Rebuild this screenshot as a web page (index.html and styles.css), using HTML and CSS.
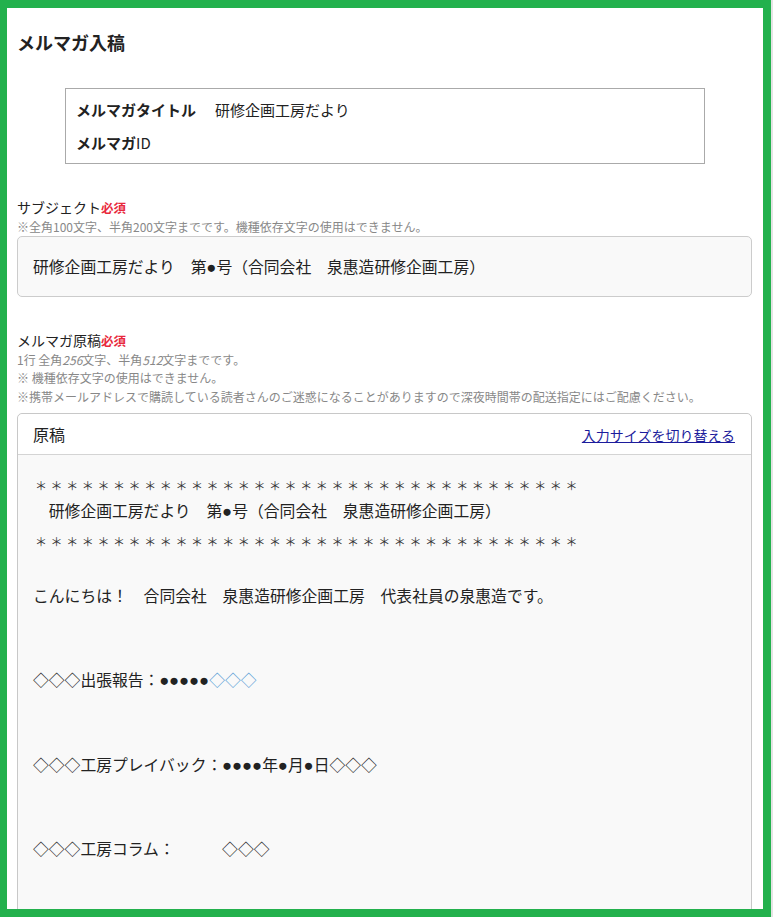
FILE: index.html
```html
<!DOCTYPE html>
<html lang="ja">
<head>
  <meta charset="UTF-8">
  <title>メルマガ入稿</title>
  <link rel="stylesheet" href="styles.css">
</head>
<body>

  <div class="frame">

    <h1 class="page-title">メルマガ入稿</h1>

    <!-- magazine info -->
    <div class="info-box">
      <div class="info-row">
        <span class="info-label">メルマガタイトル</span>
        <span class="info-value">研修企画工房だより</span>
      </div>
      <div class="info-row">
        <span class="info-label">メルマガ<span class="plain">ID</span></span>
        <span class="info-value"></span>
      </div>
    </div>

    <!-- subject -->
    <div class="field">
      <div class="field-label">サブジェクト<span class="required">必須</span></div>
      <div class="field-note">※全角100文字、半角200文字までです。機種依存文字の使用はできません。</div>
      <div class="subject-input">研修企画工房だより　第<span class="dot">●</span>号（合同会社　泉惠造研修企画工房）</div>
    </div>

    <!-- body -->
    <div class="field">
      <div class="field-label">メルマガ原稿<span class="required">必須</span></div>
      <div class="field-note">1行 全角<i>256</i>文字、半角<i>512</i>文字までです。</div>
      <div class="field-note">※ 機種依存文字の使用はできません。</div>
      <div class="field-note">※携帯メールアドレスで購読している読者さんのご迷惑になることがありますので深夜時間帯の配送指定にはご配慮ください。</div>

      <div class="draft-card">
        <div class="draft-header">
          <span class="draft-title">原稿</span>
          <a href="#" class="size-link">入力サイズを切り替える</a>
        </div>
        <div class="draft-body"><span class="stars">＊＊＊＊＊＊＊＊＊＊＊＊＊＊＊＊＊＊＊＊＊＊＊＊＊＊＊＊＊＊＊＊＊＊＊</span>
　研修企画工房だより　第<span class="dot">●</span>号（合同会社　泉惠造研修企画工房）
<span class="stars">＊＊＊＊＊＊＊＊＊＊＊＊＊＊＊＊＊＊＊＊＊＊＊＊＊＊＊＊＊＊＊＊＊＊＊</span>

こんにちは！　合同会社　泉惠造研修企画工房　代表社員の泉惠造です。


◇◇◇出張報告：<span class="dot">●●●●●</span><span class="light">◇◇◇</span>


◇◇◇工房プレイバック：<span class="dot">●●●●</span>年<span class="dot">●</span>月<span class="dot">●</span>日◇◇◇


◇◇◇工房コラム：　　　◇◇◇


</div>
      </div>
    </div>

  </div>

</body>
</html>
```

FILE: styles.css
```css
html {
  background: #e4e4e4;
}

body {
  margin: 0;
  font-family: "Noto Sans CJK JP", "Noto Sans", sans-serif;
  color: #222;
}

.frame {
  box-sizing: border-box;
  width: 771px;
  height: 917px;
  overflow: hidden;
  background: #fff;
  border: 8px solid #23b14d;
  border-left-width: 7px;
  padding: 0 11px 0 10px;
}

.page-title {
  margin: 21px 0 0;
  font-size: 18px;
  line-height: 27px;
  font-weight: bold;
}

.info-box {
  width: 640px;
  box-sizing: border-box;
  margin: 32px 0 0 48px;
  border: 1px solid #aaa;
  padding: 10px 10px 9px;
}

.info-row {
  display: flex;
  font-size: 15px;
  line-height: 22px;
  margin-bottom: 11px;
}

.info-row:last-child {
  margin-bottom: 0;
}

.info-label {
  font-weight: bold;
  width: 139px;
}

.info-label .plain {
  font-weight: normal;
}

.field {
  margin-top: 33px;
}

.field-label {
  font-size: 14px;
  line-height: 20px;
}

.required {
  color: #e8283c;
  font-size: 12.5px;
  font-weight: bold;
}

.field-note {
  font-size: 12px;
  line-height: 18.2px;
  color: #888;
}

.field-note i {
  font-style: italic;
}

.subject-input {
  height: 61px;
  box-sizing: border-box;
  border: 1px solid #ccc;
  border-radius: 5px;
  background: #f9f9f9;
  padding: 0 15px;
  font-size: 15.8px;
  line-height: 59px;
  color: #222;
}

.dot {
  font-family: "Liberation Sans", sans-serif;
  font-size: 16.5px;
  line-height: 1;
}

.draft-card {
  margin-top: 7px;
  border: 1px solid #c8c8c8;
  border-radius: 5px 5px 0 0;
  height: 520px;
  background: #f9f9f9;
}

.draft-header {
  display: flex;
  justify-content: space-between;
  align-items: center;
  height: 40px;
  padding: 0 16px 0 15px;
  background: #fff;
  border-radius: 5px 5px 0 0;
  border-bottom: 1px solid #d4d4d4;
}

.draft-title {
  font-size: 16px;
}

.size-link {
  font-size: 14px;
  color: #1c1c9c;
  text-decoration: underline;
  margin-top: 2px;
}

.draft-body {
  white-space: pre-wrap;
  padding: 14px 15px 0;
  font-size: 15.8px;
  line-height: 28.2px;
  color: #222;
}

.stars {
  font-size: 12px;
  line-height: 1;
  letter-spacing: 3.6px;
  padding-left: 2px;
  vertical-align: -2px;
  color: #333;
}

.light {
  color: #5a9fd6;
}
```
